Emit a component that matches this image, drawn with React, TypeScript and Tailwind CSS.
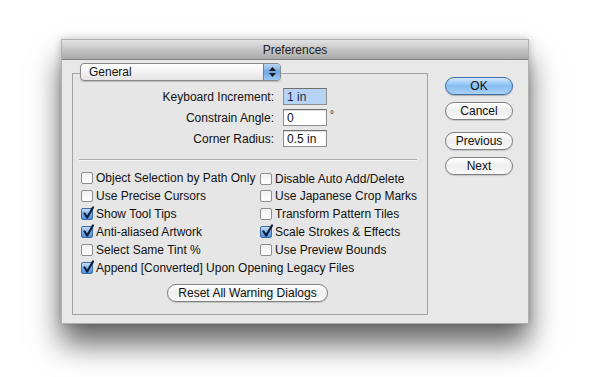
import React from "react";

const font = { fontFamily: '"Liberation Sans", Arial, sans-serif' };

function CheckBox({ checked }: { checked?: boolean }) {
  return (
    <span
      className={
        "relative flex h-[12px] w-[12px] shrink-0 rounded-[2px] border " +
        (checked
          ? "border-[#3d6aa6] bg-gradient-to-b from-[#c9e0fa] via-[#7fb0ea] to-[#4f8fde]"
          : "border-[#8e8e8e] bg-gradient-to-b from-[#f0f0f0] to-[#ffffff]")
      }
    >
      {checked && (
        <svg className="absolute left-[0px] top-[-3px]" width="13" height="14" viewBox="0 0 13 14">
          <path d="M2.5 7.5 L5.2 11.5 L11 1.5" fill="none" stroke="#0f1f3a" strokeWidth="2.2" strokeLinecap="round" strokeLinejoin="round" />
        </svg>
      )}
    </span>
  );
}

function Check({ label, checked, className = "" }: { label: string; checked?: boolean; className?: string }) {
  return (
    <div className={"flex h-[18px] items-center gap-[3px] " + className}>
      <CheckBox checked={checked} />
      <span className="whitespace-nowrap text-[12px] leading-none text-[#111]">{label}</span>
    </div>
  );
}

function Btn({ label, primary }: { label: string; primary?: boolean }) {
  return (
    <div
      className={
        "flex h-[18px] w-[68px] items-center justify-center rounded-full border text-[12px] leading-none text-[#111] " +
        (primary
          ? "border-[#3f6ea8] bg-gradient-to-b from-[#d4e7fb] via-[#86bdf2] to-[#a9d2f7] shadow-[0_1px_1px_rgba(0,0,0,0.25)]"
          : "border-[#808080] bg-gradient-to-b from-[#ffffff] via-[#eeeeee] to-[#fbfbfb] shadow-[0_1px_1px_rgba(0,0,0,0.15)]")
      }
    >
      {label}
    </div>
  );
}

function FieldRow({ label, value, selected, degree }: { label: string; value: string; selected?: boolean; degree?: boolean }) {
  return (
    <div className="flex h-[17px] items-center">
      <div className="w-[201px] text-right text-[12px] leading-none text-[#111]">{label}</div>
      <div
        className={
          "ml-[9px] flex h-[17px] w-[44px] items-center border border-[#8d8d8d] border-t-[#6f6f6f] pl-[3px] text-[12px] leading-none " +
          (selected ? "bg-[#b6d3f5] text-[#1a2a55]" : "bg-white text-[#111] shadow-[inset_0_1px_1px_rgba(0,0,0,0.15)]")
        }
      >
        {value}
      </div>
      {degree && <span className="ml-[3px] -translate-y-[3px] text-[10px] leading-none text-[#222]">°</span>}
    </div>
  );
}

export default function App() {
  return (
    <div className="h-[377px] w-[600px] overflow-hidden bg-white pl-[61px] pt-[39px]" style={font}>
      <div className="flex h-[285px] w-[468px] flex-col border border-[#b0b0b0] bg-[#e8e8e8] shadow-[0_20px_28px_rgba(0,0,0,0.6),0_0_8px_rgba(0,0,0,0.2)]">
        {/* title bar */}
        <div className="flex h-[20px] items-center justify-center border-b border-[#7f7f7f] bg-gradient-to-b from-[#e3e3e3] to-[#a9a9a9] text-[12px] leading-none text-[#222]">
          Preferences
        </div>
        {/* body */}
        <div className="flex flex-1">
          {/* left: group */}
          <div className="pl-[10px] pt-[13px]">
            <div className="relative h-[242px] w-[356px] border border-[#a3a3a3] bg-[#e6e6e6]">
              {/* popup */}
              <div className="absolute left-[7px] top-[-11px] flex h-[18px] w-[201px] overflow-hidden rounded-[4px] border border-[#8a8a8a] bg-gradient-to-b from-[#ffffff] via-[#f3f3f3] to-[#e3e3e3] shadow-[0_1px_1px_rgba(0,0,0,0.2)]">
                <div className="flex flex-1 items-center pl-[8px] text-[12px] leading-none text-[#111]">General</div>
                <div className="flex w-[17px] flex-col items-center justify-center gap-[2px] border-l border-[#5a83bd] bg-gradient-to-b from-[#b9d6f6] via-[#6fa6e6] to-[#9cc8f3]">
                  <svg width="7" height="4" viewBox="0 0 7 4"><path d="M3.5 0 L7 4 L0 4 Z" fill="#1b1b1b" /></svg>
                  <svg width="7" height="4" viewBox="0 0 7 4"><path d="M0 0 L7 0 L3.5 4 Z" fill="#1b1b1b" /></svg>
                </div>
              </div>

              <div className="flex flex-col pt-[14px]">
                <div className="flex flex-col gap-[4px]">
                  <FieldRow label="Keyboard Increment:" value="1 in" selected />
                  <FieldRow label="Constrain Angle:" value="0" degree />
                  <FieldRow label="Corner Radius:" value="0.5 in" />
                </div>

                <div className="ml-[6px] mr-[10px] mt-[12px] h-px bg-[#a9a9a9] shadow-[0_1px_0_#f6f6f6]" />

                <div className="mt-[9px] grid grid-cols-[179px_1fr] pl-[8px]">
                  <Check label="Object Selection by Path Only" />
                  <Check label="Disable Auto Add/Delete" className="translate-y-[1px]" />
                  <Check label="Use Precise Cursors" />
                  <Check label="Use Japanese Crop Marks" />
                  <Check label="Show Tool Tips" checked />
                  <Check label="Transform Pattern Tiles" />
                  <Check label="Anti-aliased Artwork" checked />
                  <Check label="Scale Strokes & Effects" checked />
                  <Check label="Select Same Tint %" />
                  <Check label="Use Preview Bounds" />
                  <Check label="Append [Converted] Upon Opening Legacy Files" checked className="col-span-2" />
                </div>

                <div className="ml-[94px] mt-[7px] flex h-[18px] w-[161px] items-center justify-center rounded-full border border-[#808080] bg-gradient-to-b from-[#ffffff] via-[#eeeeee] to-[#fbfbfb] text-[12px] leading-none text-[#111] shadow-[0_1px_1px_rgba(0,0,0,0.15)]">
                  Reset All Warning Dialogs
                </div>
              </div>
            </div>
          </div>

          {/* right buttons */}
          <div className="flex flex-col pl-[17px] pt-[17px]">
            <Btn label="OK" primary />
            <div className="mt-[7px]"><Btn label="Cancel" /></div>
            <div className="mt-[12px]"><Btn label="Previous" /></div>
            <div className="mt-[7px]"><Btn label="Next" /></div>
          </div>
        </div>
      </div>
    </div>
  );
}
